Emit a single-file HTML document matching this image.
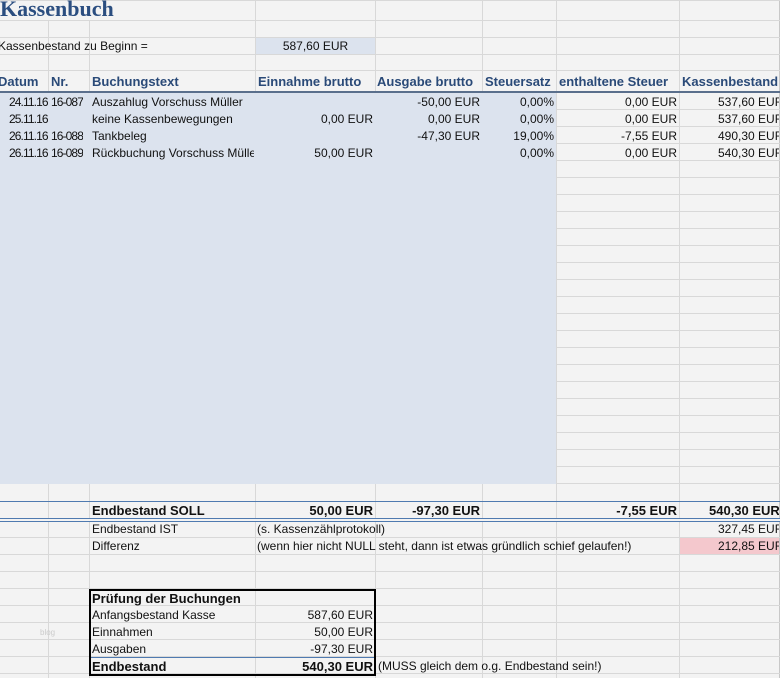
<!DOCTYPE html>
<html><head><meta charset="utf-8"><style>
*{margin:0;padding:0;box-sizing:border-box}
body{width:780px;height:678px;overflow:hidden;background:#f3f3f3;position:relative;font-family:"Liberation Sans",sans-serif;font-size:12px;color:#111}
.h{position:absolute;height:1px;background:#d8d8d8;left:0;width:780px}
.v{position:absolute;width:1px;background:#d8d8d8}
.t{position:absolute;white-space:nowrap;line-height:17px;height:17px;overflow:hidden}
.r{text-align:right}
.t.d{font-size:12px;letter-spacing:-0.9px}
.hd{font-weight:bold;font-size:13px;color:#2a4a78;line-height:21px;height:21px}
.b{font-weight:bold;font-size:13px}
</style></head><body>
<div class="v" style="left:48px;top:20px;height:658px"></div>
<div class="v" style="left:89px;top:20px;height:658px"></div>
<div class="v" style="left:255px;top:0;height:678px"></div>
<div class="v" style="left:375px;top:0;height:678px"></div>
<div class="v" style="left:482px;top:0;height:678px"></div>
<div class="v" style="left:556px;top:0;height:678px"></div>
<div class="v" style="left:679px;top:0;height:678px"></div>
<div class="v" style="left:779px;top:0;height:678px;background:#c8c8c8"></div>
<div class="h" style="top:0"></div>
<div class="h" style="top:20px"></div>
<div class="h" style="top:37px"></div>
<div class="h" style="top:54px"></div>
<div class="h" style="top:70px"></div>
<div class="h" style="top:109px"></div><div class="h" style="top:126px"></div><div class="h" style="top:143px"></div><div class="h" style="top:160px"></div>
<div class="h" style="top:177px"></div><div class="h" style="top:194px"></div><div class="h" style="top:211px"></div><div class="h" style="top:228px"></div>
<div class="h" style="top:245px"></div><div class="h" style="top:262px"></div><div class="h" style="top:279px"></div><div class="h" style="top:296px"></div>
<div class="h" style="top:313px"></div><div class="h" style="top:330px"></div><div class="h" style="top:347px"></div><div class="h" style="top:364px"></div>
<div class="h" style="top:381px"></div><div class="h" style="top:398px"></div><div class="h" style="top:415px"></div><div class="h" style="top:432px"></div>
<div class="h" style="top:449px"></div><div class="h" style="top:466px"></div><div class="h" style="top:483px"></div>
<div class="h" style="top:537px"></div><div class="h" style="top:554px"></div><div class="h" style="top:571px"></div><div class="h" style="top:588px"></div>
<div class="h" style="top:605px"></div><div class="h" style="top:622px"></div><div class="h" style="top:639px"></div><div class="h" style="top:656px"></div><div class="h" style="top:673px"></div>
<div style="position:absolute;left:0;top:1px;width:255px;height:19px;background:#f3f3f3"></div>
<div style="position:absolute;left:256px;top:38px;width:119px;height:16px;background:#dce3ee"></div>
<div style="position:absolute;left:0;top:92px;width:556px;height:392px;background:#dce3ee"></div>
<div style="position:absolute;left:0;top:91px;width:780px;height:2px;background:#5a6f8c"></div>
<div style="position:absolute;left:0;top:501px;width:780px;height:1px;background:#4f7ab0"></div>
<div style="position:absolute;left:0;top:518px;width:780px;height:4px;background:#f3f3f3;border-top:1px solid #4f7ab0;border-bottom:1px solid #4f7ab0"></div>
<div style="position:absolute;left:680px;top:538px;width:99px;height:16px;background:#f4c8cd"></div>
<div style="position:absolute;left:89px;top:589px;width:287px;height:87px;border:2px solid #000"></div>
<div style="position:absolute;left:91px;top:657px;width:283px;height:1px;background:#4f7ab0"></div>

<div class="t" style="left:0;top:-3px;height:26px;line-height:24px;font-family:'Liberation Serif',serif;font-weight:bold;font-size:22px;color:#2b4e80">Kassenbuch</div>
<div class="t" style="left:-2px;top:38px">Kassenbestand zu Beginn =</div>
<div class="t" style="left:256px;top:38px;width:119px;text-align:center">587,60 EUR</div>

<div class="t hd" style="left:-2px;top:71px">Datum</div>
<div class="t hd" style="left:51px;top:71px">Nr.</div>
<div class="t hd" style="left:92px;top:71px">Buchungstext</div>
<div class="t hd" style="left:258px;top:71px">Einnahme brutto</div>
<div class="t hd" style="left:377px;top:71px">Ausgabe brutto</div>
<div class="t hd" style="left:485px;top:71px">Steuersatz</div>
<div class="t hd" style="left:559px;top:71px">enthaltene Steuer</div>
<div class="t hd" style="left:682px;top:71px;width:97px">Kassenbestand</div>

<div class="t d" style="left:9px;top:94px">24.11.16</div><div class="t d" style="left:51px;top:94px">16-087</div><div class="t" style="left:92px;top:94px">Auszahlug Vorschuss Müller</div>
<div class="t r" style="left:376px;top:94px;width:104px">-50,00 EUR</div><div class="t r" style="left:483px;top:94px;width:71px">0,00%</div><div class="t r" style="left:557px;top:94px;width:120px">0,00 EUR</div><div class="t" style="left:718px;top:94px;width:61px">537,60 EUR</div>

<div class="t d" style="left:9px;top:111px">25.11.16</div><div class="t" style="left:92px;top:111px">keine Kassenbewegungen</div><div class="t r" style="left:256px;top:111px;width:117px">0,00 EUR</div>
<div class="t r" style="left:376px;top:111px;width:104px">0,00 EUR</div><div class="t r" style="left:483px;top:111px;width:71px">0,00%</div><div class="t r" style="left:557px;top:111px;width:120px">0,00 EUR</div><div class="t" style="left:718px;top:111px;width:61px">537,60 EUR</div>

<div class="t d" style="left:9px;top:128px">26.11.16</div><div class="t d" style="left:51px;top:128px">16-088</div><div class="t" style="left:92px;top:128px">Tankbeleg</div>
<div class="t r" style="left:376px;top:128px;width:104px">-47,30 EUR</div><div class="t r" style="left:483px;top:128px;width:71px">19,00%</div><div class="t r" style="left:557px;top:128px;width:120px">-7,55 EUR</div><div class="t" style="left:718px;top:128px;width:61px">490,30 EUR</div>

<div class="t d" style="left:9px;top:145px">26.11.16</div><div class="t d" style="left:51px;top:145px">16-089</div><div class="t" style="left:92px;top:145px;width:162px">Rückbuchung Vorschuss Müller</div><div class="t r" style="left:256px;top:145px;width:117px">50,00 EUR</div>
<div class="t r" style="left:483px;top:145px;width:71px">0,00%</div><div class="t r" style="left:557px;top:145px;width:120px">0,00 EUR</div><div class="t" style="left:718px;top:145px;width:61px">540,30 EUR</div>

<div class="t b" style="left:92px;top:502px">Endbestand SOLL</div>
<div class="t b r" style="left:256px;top:502px;width:117px">50,00 EUR</div>
<div class="t b r" style="left:376px;top:502px;width:104px">-97,30 EUR</div>
<div class="t b r" style="left:557px;top:502px;width:120px">-7,55 EUR</div>
<div class="t b" style="left:709px;top:502px;width:70px">540,30 EUR</div>

<div class="t" style="left:92px;top:521px">Endbestand IST</div>
<div class="t" style="left:257px;top:521px">(s. Kassenzählprotokoll)</div>
<div class="t" style="left:718px;top:521px;width:61px">327,45 EUR</div>
<div class="t" style="left:92px;top:538px">Differenz</div>
<div class="t" style="left:257px;top:538px">(wenn hier nicht NULL steht, dann ist etwas gründlich schief gelaufen!)</div>
<div class="t" style="left:718px;top:538px;width:61px">212,85 EUR</div>

<div class="t b" style="left:92px;top:590px">Prüfung der Buchungen</div>
<div class="t" style="left:92px;top:607px">Anfangsbestand Kasse</div><div class="t r" style="left:256px;top:607px;width:117px">587,60 EUR</div>
<div class="t" style="left:92px;top:624px">Einnahmen</div><div class="t r" style="left:256px;top:624px;width:117px">50,00 EUR</div>
<div class="t" style="left:92px;top:641px">Ausgaben</div><div class="t r" style="left:256px;top:641px;width:117px">-97,30 EUR</div>
<div class="t b" style="left:92px;top:658px">Endbestand</div><div class="t b r" style="left:256px;top:658px;width:117px">540,30 EUR</div>
<div class="t" style="left:378px;top:658px">(MUSS gleich dem o.g. Endbestand sein!)</div>
<div class="t" style="left:40px;top:624px;font-size:8px;color:#ccc">blog</div>
</body></html>
